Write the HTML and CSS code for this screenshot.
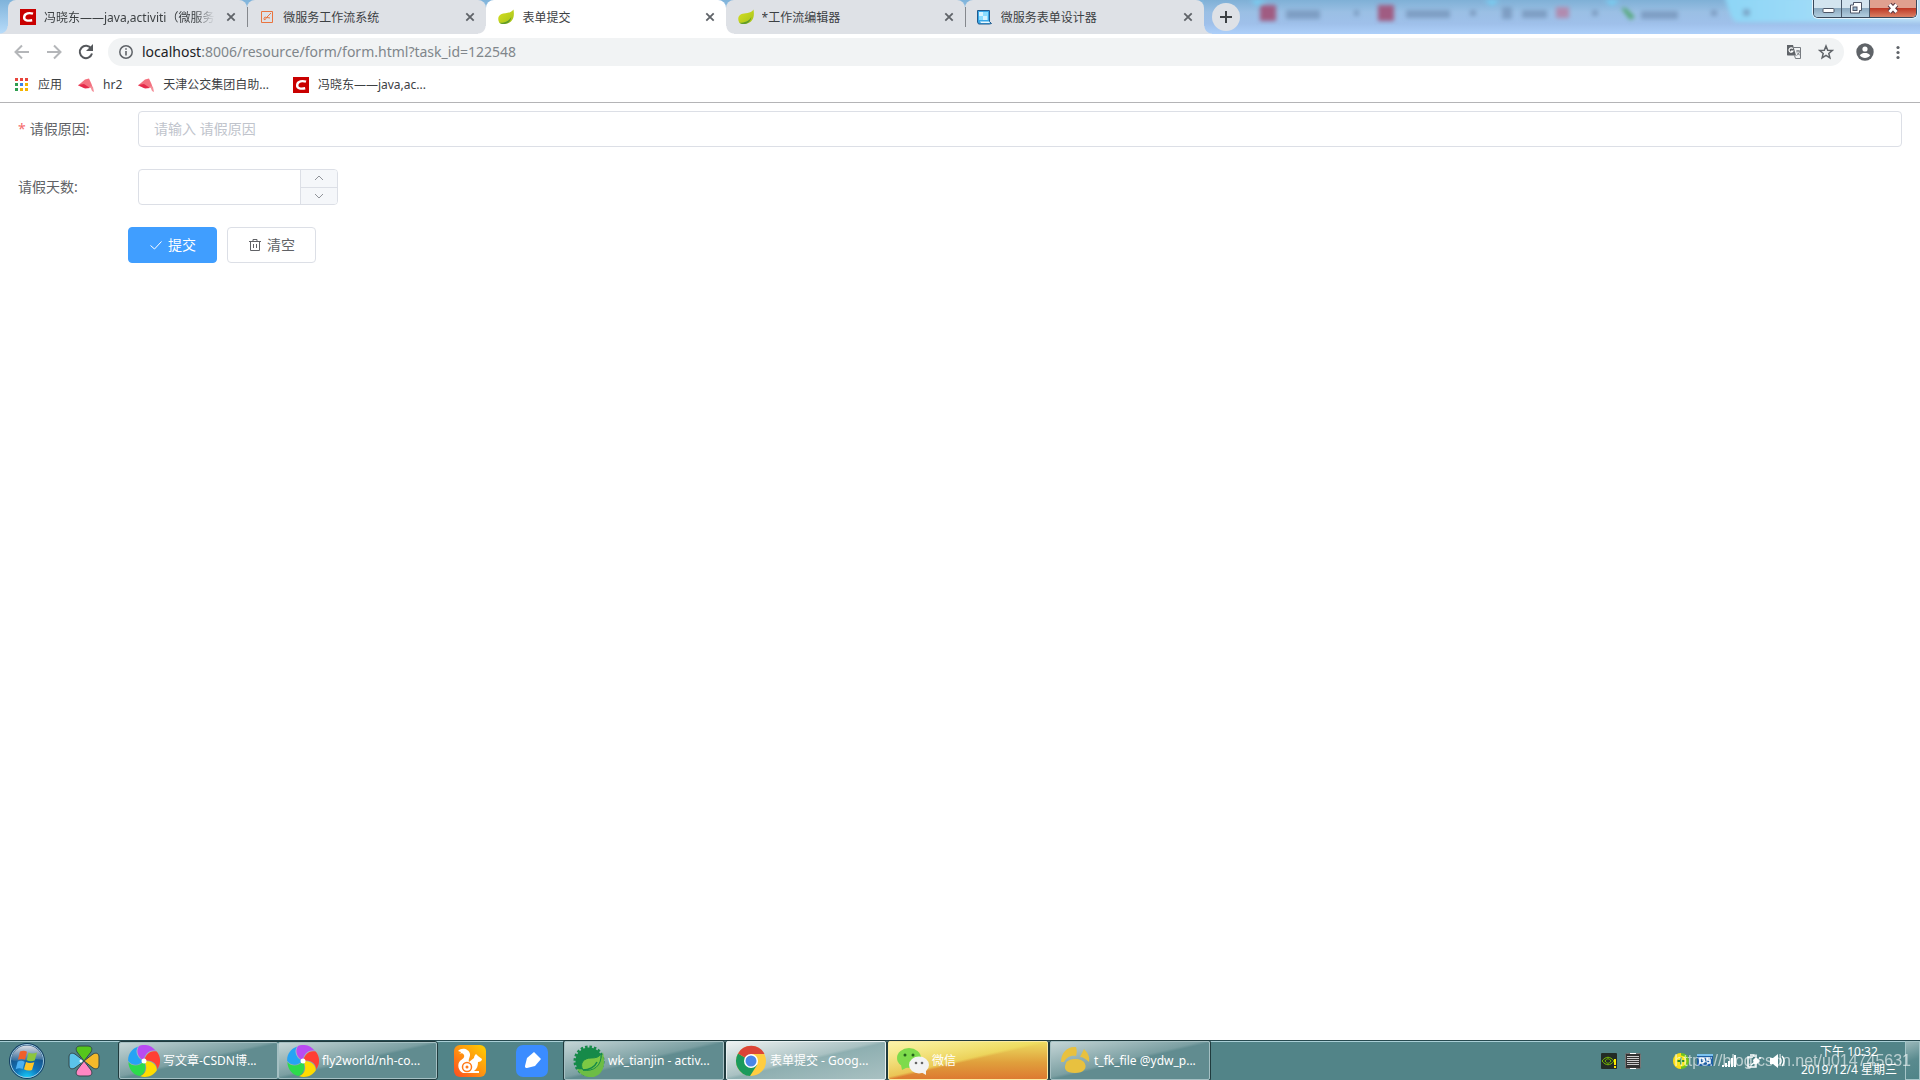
FILE: index.html
```html
<!DOCTYPE html>
<html lang="zh-CN">
<head>
<meta charset="utf-8">
<title>表单提交</title>
<link rel="stylesheet" href="styles.css">
</head>
<body>
<svg class="defs" aria-hidden="true">
  <defs>
    <linearGradient id="leafFill" x1="0" y1="0" x2="1" y2="1"><stop offset="0" stop-color="#d9e021"/><stop offset="1" stop-color="#a3c21a"/></linearGradient>
    <symbol id="close" viewBox="0 0 16 16"><path d="M4.300 4.300l7.400 7.400M11.700 4.300l-7.400 7.400" stroke="#5f6368" stroke-width="1.800" fill="none"/></symbol>
    <symbol id="csdn" viewBox="0 0 16 16"><rect width="16" height="16" fill="#c90000"/><path d="M13 4.700C9.500 3.500 4.700 4 4.200 7.800c-.5 3.900 3.800 4.300 8 3.500" fill="none" stroke="#fff" stroke-width="2.400"/></symbol>
    <symbol id="leaf" viewBox="0 0 16 16"><path d="M15.500.5c.8 5 .5 9-2.500 12C10 15.200 5 15.500 1.500 14-.5 11-.2 7 3 5.300 7 3.500 12.500 5 15.500.5z" fill="url(#leafFill)"/><path d="M1.300 13.800C6 14 11 12.500 13.300 8c-.5 4-3 6.500-6.500 7-2 .3-4 0-5.500-1.200z" fill="#5f9b2c"/></symbol>
    <symbol id="hat" viewBox="0 0 16 16"><path d="M0 8.500L7 2.500l4-1 2.500 5.500 1.500 4.500-3-1-6 .5z" fill="#f4717f"/><path d="M0 8l6-1 6 4-5 .5z" fill="#e52b4b"/><path d="M12 9l3 1 1 5-2-1z" fill="#f4909a"/></symbol>
    <symbol id="pinwheel" viewBox="0 0 32 32">
      <g transform="translate(16 16)">
        <path d="M0 0C-5-3-9-9-5-15 1-17.500 8-15.500 12-10 6-12 0-7 0 0z" fill="#b94bf2"/>
        <path d="M0 0C-5-3-9-9-5-15 1-17.500 8-15.500 12-10 6-12 0-7 0 0z" fill="#ff3f35" transform="rotate(72)"/>
        <path d="M0 0C-5-3-9-9-5-15 1-17.500 8-15.500 12-10 6-12 0-7 0 0z" fill="#ffdc00" transform="rotate(144)"/>
        <path d="M0 0C-5-3-9-9-5-15 1-17.500 8-15.500 12-10 6-12 0-7 0 0z" fill="#2cdb4c" transform="rotate(216)"/>
        <path d="M0 0C-5-3-9-9-5-15 1-17.500 8-15.500 12-10 6-12 0-7 0 0z" fill="#25a3f5" transform="rotate(288)"/>
        <circle r="2.500" fill="#fff"/>
      </g>
    </symbol>
  </defs>
</svg>

<header class="browser">
  <div class="strip">
    <svg class="ghost" viewBox="0 0 716 34" preserveAspectRatio="none" aria-hidden="true">
      <defs>
        <linearGradient id="sky" x1="0" y1="0" x2="0" y2="1"><stop offset="0" stop-color="#7fb0d6"/><stop offset=".35" stop-color="#9abfe4"/><stop offset=".7" stop-color="#9fc0ea"/><stop offset="1" stop-color="#aed0fa"/></linearGradient>
        <linearGradient id="sky2" x1="0" y1="0" x2="1" y2="0"><stop offset="0" stop-color="#8dd6f6"/><stop offset=".35" stop-color="#9bdaf8"/><stop offset="1" stop-color="#bfe0f6"/></linearGradient>
        <filter id="soft"><feGaussianBlur stdDeviation="2"/></filter>
      </defs>
      <rect width="716" height="34" fill="url(#sky)"/>
      <g filter="url(#soft)">
        <path d="M520-4H730V22H532C526 18 524 6 520-4z" fill="url(#sky2)"/>
        <path d="M46 0h16l-8 6zM280 0h16l-8 6zM400 0h16l-8 6z" fill="#78cdf2"/>
        <g fill="#a05c82"><rect x="56" y="5" width="16" height="16"/><rect x="174" y="5" width="16" height="16"/></g>
        <g fill="#7390b5" opacity=".7"><rect x="82" y="10" width="34" height="9"/><rect x="150" y="10" width="5" height="6"/><rect x="202" y="10" width="44" height="8"/><rect x="266" y="10" width="6" height="6"/><rect x="298" y="7" width="10" height="12"/><rect x="318" y="10" width="25" height="8"/><rect x="388" y="10" width="6" height="6"/><rect x="437" y="11" width="37" height="8"/><rect x="507" y="10" width="6" height="6"/><rect x="539" y="9" width="7" height="7"/></g>
        <rect x="352" y="7" width="13" height="11" fill="#b18baf"/><path d="M417 8l5 0 9 9-5 3z" fill="#55a879"/>
      </g>
    </svg>
    <nav class="tabs" aria-label="标签页">
      <div class="tab flare-left"><svg class="fav"><use href="#csdn"/></svg><a class="tab-title faded" href="#">冯晓东——java,activiti（微服务</a><button class="tab-close" aria-label="关闭"><svg><use href="#close"/></svg></button></div>
      <div class="tab divided"><svg class="fav" viewBox="0 0 16 16"><path d="M2.500 2.500h11v11h-11zM5 9c1-1.500 2-1 2 0s-.5 2-2 1.500zM7 9l5-5M8 8.500l3 .5" fill="none" stroke="#e9743f"/></svg><a class="tab-title" href="#">微服务工作流系统</a><button class="tab-close" aria-label="关闭"><svg><use href="#close"/></svg></button></div>
      <div class="tab active flare-left flare-right"><svg class="fav"><use href="#leaf"/></svg><a class="tab-title" href="#" aria-current="page">表单提交</a><button class="tab-close" aria-label="关闭"><svg><use href="#close"/></svg></button></div>
      <div class="tab"><svg class="fav"><use href="#leaf"/></svg><a class="tab-title" href="#">*工作流编辑器</a><button class="tab-close" aria-label="关闭"><svg><use href="#close"/></svg></button></div>
      <div class="tab divided flare-right"><svg class="fav" viewBox="0 0 16 16"><path d="M.5 1.500h12v11l2 2-2 .5h-11l-1-2z" fill="#39a8e8" stroke="#235a8c"/><path d="M2 3h9v8H2z" fill="#8adcff"/><path d="M2 3h4v4H2zM6 7h4v4H6z" fill="#d4f2ff"/><path d="M3 12.500h9l1 1.500H4z" fill="#eaf9ff"/></svg><a class="tab-title" href="#">微服务表单设计器</a><button class="tab-close" aria-label="关闭"><svg><use href="#close"/></svg></button></div>
    </nav>
    <button class="new-tab" aria-label="新标签页"><svg viewBox="0 0 28 28"><path d="M14 8v12M8 14h12" stroke="#3c4043" stroke-width="2"/></svg></button>
    <div class="window-buttons">
      <button class="win" aria-label="最小化"><svg viewBox="0 0 28 17"><rect x="9" y="8.500" width="11" height="4" rx="1" fill="#fff" stroke="#4d5566"/></svg></button>
      <button class="win" aria-label="还原"><svg viewBox="0 0 28 17"><path d="M11.500 2.500h8v8h-2v2.500h-9V5h3z" fill="#fff" stroke="#4d5566"/><rect x="11" y="7" width="4" height="3.500" fill="#9dbbd2" stroke="#4d5566"/></svg></button>
      <button class="win win-close" aria-label="关闭窗口"><svg viewBox="0 0 28 17"><path d="M10.500 4.500l7 7.500M17.500 4.500l-7 7.500" stroke="#5b3a44" stroke-width="5"/><path d="M10.500 4.500l7 7.500M17.500 4.500l-7 7.500" stroke="#fff" stroke-width="3"/></svg></button>
    </div>
  </div>

  <div class="toolbar">
    <button class="tool" aria-label="后退"><svg viewBox="0 0 16 16"><path d="M15 8H2M8 1.500L1.500 8 8 14.500" fill="none" stroke="#b4b6b9" stroke-width="2"/></svg></button>
    <button class="tool" aria-label="前进"><svg viewBox="0 0 16 16"><path d="M1 8h13M8 1.500L14.500 8 8 14.500" fill="none" stroke="#b4b6b9" stroke-width="2"/></svg></button>
    <button class="tool" aria-label="刷新"><svg viewBox="0 0 16 16"><path d="M13.200 4.500A6.200 6.200 0 1 0 14 9.600" fill="none" stroke="#55585c" stroke-width="2"/><path d="M15 0v7H8z" fill="#55585c"/></svg></button>
    <div class="omnibox">
      <svg class="glyph" viewBox="0 0 16 16"><circle cx="8" cy="8" r="6.200" fill="none" stroke="#5f6368" stroke-width="1.500"/><path d="M8 7v4.500M8 4.200v1.600" stroke="#5f6368" stroke-width="1.600"/></svg>
      <a class="url" href="#"><span class="host">localhost</span>:8006/resource/form/form.html?task_id=122548</a>
      <button class="tool" aria-label="翻译此页"><svg viewBox="0 0 16 16"><path d="M1 1h6l3 10.500H1.500L1 11z" fill="#5f6368"/><path d="M7.500 3.500h7v11h-5l-1-3M10 7h4M12 6v1.500M13.500 7.500c-.5 2-1.500 3-3 4M11 8.500l3 3" fill="none" stroke="#777b80"/><path d="M6.800 4.700A2.100 2.100 0 1 0 7 7H5" fill="none" stroke="#fff" stroke-width="1.200"/></svg></button>
      <button class="tool" aria-label="添加书签"><svg viewBox="0 0 16 16"><path d="M8 2l1.700 4.200 4.500.3-3.400 2.900 1.100 4.400L8 11.400l-3.900 2.400 1.100-4.400L1.800 6.500l4.500-.3z" fill="none" stroke="#5f6368" stroke-width="1.500"/></svg></button>
    </div>
    <button class="tool profile" aria-label="用户"><svg viewBox="0 0 18 18"><circle cx="9" cy="9" r="8.700" fill="#5f6368"/><circle cx="9" cy="6" r="2.600" fill="#fff"/><path d="M3.800 12.300C5 10.400 7 9.900 9 9.900s4 .5 5.200 2.400C13 14.200 11 15 9 15s-4-.8-5.200-2.700z" fill="#fff"/></svg></button>
    <button class="tool" aria-label="菜单"><svg viewBox="0 0 16 16" fill="#5f6368"><circle cx="8" cy="3.500" r="1.600"/><circle cx="8" cy="8.500" r="1.600"/><circle cx="8" cy="13.500" r="1.600"/></svg></button>
  </div>

  <nav class="bookmarks" aria-label="书签">
    <a href="#"><svg class="fav" viewBox="0 0 16 16"><path d="M2 1h3v3H2zM7 1h3v3H7zM12 1h3v3h-3z" fill="#e8453c"/><path d="M2 6h3v3H2zM2 11h3v3H2z" fill="#2f9e50"/><path d="M7 6h3v3H7z" fill="#3b82e8"/><path d="M12 6h3v3h-3zM7 11h3v3H7zM12 11h3v3h-3z" fill="#f5b400"/></svg>应用</a>
    <a href="#"><svg class="fav"><use href="#hat"/></svg>hr2</a>
    <a href="#"><svg class="fav"><use href="#hat"/></svg>天津公交集团自助...</a>
    <a class="spaced" href="#"><svg class="fav"><use href="#csdn"/></svg>冯晓东——java,ac...</a>
  </nav>
</header>

<main class="page">
  <form class="form">
    <div class="field">
      <label class="required" for="reason">请假原因:</label>
      <input class="text" id="reason" type="text" placeholder="请输入 请假原因">
    </div>
    <div class="field">
      <label for="days">请假天数:</label>
      <div class="stepper">
        <input id="days" type="text" inputmode="numeric">
        <div class="steps">
          <button type="button" aria-label="增加"><svg viewBox="0 0 10 6"><path d="M1 5l4-4 4 4"/></svg></button>
          <button type="button" aria-label="减少"><svg viewBox="0 0 10 6"><path d="M1 1l4 4 4-4"/></svg></button>
        </div>
      </div>
    </div>
    <div class="actions">
      <button class="btn primary" type="submit"><svg viewBox="0 0 14 14"><path d="M1.500 7.500l4 3.500 7-7.500"/></svg>提交</button>
      <button class="btn" type="reset"><svg viewBox="0 0 14 14"><path d="M1 3.500h12M2.500 3.500v9h9v-9M5 3.500v-2h4v2M5.500 6v4M8.500 6v4"/></svg>清空</button>
    </div>
  </form>
</main>

<footer class="taskbar">
  <button class="orb" aria-label="开始"><svg viewBox="0 0 38 38"><defs><radialGradient id="orbFill" cx=".5" cy="1" r=".9"><stop offset="0" stop-color="#16d4ff"/><stop offset=".4" stop-color="#1173b8"/><stop offset="1" stop-color="#1a4270"/></radialGradient><linearGradient id="gloss" x1="0" y1="0" x2="0" y2="1"><stop offset="0" stop-color="#fff" stop-opacity=".85"/><stop offset="1" stop-color="#fff" stop-opacity=".1"/></linearGradient></defs><circle cx="19" cy="19" r="17.500" fill="url(#orbFill)" stroke="#143f63"/><circle cx="19" cy="19" r="16.500" fill="none" stroke="#9cc9df"/><path d="M3 18C4 9 11 3.500 19 3.500S34 9 35 18c-9-3-23 3-32 0z" fill="url(#gloss)"/><path d="M12 9.500c3-1.200 5-1 7 .2l-2 8c-2.500-1-4.500-1-7 0z" fill="#f0602a"/><path d="M20.500 10.500c2.500 1.300 5 1.300 8.500 0l-2.300 8c-3 1.200-5.500 1-8-.3z" fill="#8cc63f"/><path d="M9.700 19.500c2.500-1 4.500-1 7 .2l-2 7.300c-2.500-1-4.500-1-7 .2z" fill="#4bb0f2"/><path d="M18 20c2.500 1.200 5 1.300 8.300.2L24 28c-3 1-5.500.6-8-.8z" fill="#ffc526"/></svg></button>
  <button class="quick" aria-label="四叶草"><svg viewBox="0 0 32 32"><g stroke="#33474a"><path d="M16 16L9 7C7 3 9 1 12 1h8c3 0 5 2 3 6z" fill="#55c61c"/><path d="M16 16l9-7c4-2 6 0 6 3v8c0 3-2 5-6 3z" fill="#f4b92a"/><path d="M16 16l7 9c2 4 0 6-3 6h-8c-3 0-5-2-3-6z" fill="#ff87c3"/><path d="M16 16l-9-7c-4-2-6 0-6 3v8c0 3 2 5 6 3z" fill="#5bc3ea"/></g><circle cx="13" cy="16" r="1.500" fill="#fff"/></svg></button>
  <div class="group">
    <button class="task"><svg><use href="#pinwheel"/></svg><span>写文章-CSDN博...</span></button>
    <button class="task"><svg><use href="#pinwheel"/></svg><span>fly2world/nh-co...</span></button>
  </div>
  <div class="pins">
    <button class="quick" aria-label="UC浏览器"><svg viewBox="0 0 32 32"><defs><linearGradient id="ucFill" x1="1" y1="0" x2="0" y2="1"><stop offset="0" stop-color="#ffd000"/><stop offset=".5" stop-color="#ff9410"/><stop offset="1" stop-color="#ff4b1f"/></linearGradient></defs><rect width="32" height="32" rx="6" fill="url(#ucFill)"/><path d="M4 6c4-4 11-2 12 3 .5 3-2 5-1 8l5-4c0-2 1-3 2-4l2 2 4 3c0 2-2 3-4 3 0 4-1 7-4 9h5v2H9c-5-2-6-9-3-12 2-2 5-3 4-6-1-2-3-2-5-1 1-1 2-1 2-2z" fill="#fff"/><circle cx="13" cy="22" r="4.500" fill="none" stroke="#ff7a18" stroke-width="1.500"/><circle cx="13" cy="22" r="1.500" fill="#ff7a18"/></svg></button>
    <button class="quick" aria-label="笔记"><svg viewBox="0 0 32 32"><rect width="32" height="32" rx="7" fill="#3b8cff"/><path d="M9 21l2-8 7-6 7 7-6 7-8 2c-2 .3-2-1-2-2z" fill="#fff"/></svg></button>
  </div>
  <div class="windows">
    <button class="task framed"><svg viewBox="0 0 32 32"><circle cx="16" cy="16" r="13.500" fill="#168a49"/><circle cx="16" cy="16" r="14" fill="none" stroke="#168a49" stroke-width="3" stroke-dasharray="2.500 1.900"/><path d="M30 7c2 11 2 21-9 25-7 1-14-2-17-8 7 1 23 0 26-17z" fill="#6dbd45"/><path d="M28 9c1 12-8 18-18 16-4-7 1-12 8-12 5 0 8-1 10-4z" fill="#7cc844" stroke="#168a49"/><path d="M10 25c6 0 12-3 14-8" fill="none" stroke="#168a49" stroke-width="1.500"/></svg><span>wk_tianjin - activ...</span></button>
    <button class="task framed current"><svg viewBox="0 0 32 32"><circle cx="16" cy="16" r="15" fill="#ffcd40"/><path d="M16 16L3 8.500A15 15 0 0 0 15 31l7-11z" fill="#1a9a5b"/><path d="M16 16L3 8.500A15 15 0 0 1 29.500 9H16z" fill="#db4437"/><circle cx="16" cy="16" r="7" fill="#fff"/><circle cx="16" cy="16" r="5.500" fill="#4a86e8"/></svg><span>表单提交 - Goog...</span></button>
    <button class="task framed alert"><svg viewBox="0 0 32 32"><ellipse cx="12" cy="13" rx="12" ry="10" fill="#7edb4c"/><path d="M4 20l1 5 6-3z" fill="#7edb4c"/><circle cx="8" cy="10" r="1.500" fill="#26631c"/><circle cx="16" cy="10" r="1.500" fill="#26631c"/><ellipse cx="22" cy="20" rx="10" ry="8.500" fill="#f2f3f3"/><path d="M24 27l5 3v-5z" fill="#f2f3f3"/><circle cx="19" cy="18" r="1.300" fill="#666"/><circle cx="25" cy="18" r="1.300" fill="#666"/></svg><span>微信</span></button>
    <button class="task framed"><svg viewBox="0 0 32 32" fill="#e8c13f"><path d="M2 17C2 8 8 1 17 2c1 3 1 6 0 9-6-1-10 2-12 6z"/><path d="M25 4c4 4 6 8 5 13-3-3-6-5-9-5z"/><path d="M7 18c2-5 17-6 19 1 2 4-1 9-10 9S4 24 7 18z"/></svg><span>t_fk_file @ydw_p...</span></button>
  </div>
  <div class="tray">
    <div class="tray-icons">
      <svg viewBox="0 0 16 16"><rect width="16" height="16" rx="1" fill="#232b25"/><path d="M1 8c4-5 8-5 12 0-4 5-8 5-12 0zM4 8c2-3 4-3 6 0-2 3-4 3-6 0z" fill="none" stroke="#76b900"/><path d="M14 6v6M14 13v2" stroke="#ffe600" stroke-width="2"/></svg>
      <svg viewBox="0 0 16 16"><rect x=".5" y=".5" width="15" height="15" rx="1" fill="#333" stroke="#777"/><path d="M2 3.500h12M2 5.500h12M2 7.500h12M2 9.500h12M2 11.500h12" stroke="#ccc"/><path d="M5 .5h6M5 15.500h6" stroke="#fff"/></svg>
    </div>
    <div class="tray-icons">
      <svg viewBox="0 0 16 16"><circle cx="8" cy="8" r="8" fill="#6fc321"/><path d="M8 0a8 8 0 0 0 0 16z" fill="#ffd91a"/><circle cx="8" cy="8" r="5.500" fill="#f7e61a"/><path d="M8 4.500v7M4.500 8h7" stroke="#2b8c22" stroke-width="2"/></svg>
      <svg viewBox="0 0 16 16"><path d="M0 2h16v11H0z" fill="#1d5fa5"/><path d="M0 1h16v2H0z" fill="#7cc2ef"/><path d="M3 5h2c3 0 3 5 0 5H3zM13 5h-3v2h3v3h-3" fill="none" stroke="#fff" stroke-width="1.500"/></svg>
      <svg viewBox="0 0 16 16"><path d="M1 12h2v2H1zM4 10h2v4H4zM7 8h2v6H7zM10 5h2v9h-2zM13 2h2v12h-2z" fill="#fff"/></svg>
      <svg viewBox="0 0 16 16"><path d="M8 4H3v10h8v-3M5 2h4v2" fill="none" stroke="#fff" stroke-width="1.500"/><path d="M8 7l3-3 4 4-3 3H9z" fill="#fff"/><path d="M6 12l4-3M11 1.500v3M14 5h2" stroke="#fff" stroke-width="1.500"/></svg>
      <svg viewBox="0 0 16 16"><path d="M1 5h3l5-4v14l-5-4H1z" fill="#fff"/><path d="M11 5c1.500 2 1.500 4 0 6M13 3c2.500 3 2.500 7 0 10" fill="none" stroke="#fff" stroke-width="1.300"/></svg>
    </div>
    <time class="clock" datetime="2019-12-04T22:32"><span>下午 10:32</span><span>2019/12/4 星期三</span></time>
    <button class="peek" aria-label="显示桌面"></button>
  </div>
  <div class="watermark">https://blog.csdn.net/u014745631</div>
</footer>
</body>
</html>
```
FILE: styles.css
```css
* { box-sizing: border-box; }

body {
  margin: 0;
  min-height: 100vh;
  display: flex;
  flex-direction: column;
  background: #fff;
  color: #3c4043;
  font: 12px/16px "Noto Sans", "Noto Sans CJK SC", sans-serif;
}

button {
  margin: 0;
  padding: 0;
  border: 0;
  background: none;
  font: inherit;
  color: inherit;
  display: flex;
  align-items: center;
  justify-content: center;
}

a { color: inherit; text-decoration: none; }
svg { display: block; flex: none; }

.defs { position: absolute; width: 0; height: 0; }
.fav { width: 16px; height: 16px; }

/* Tab strip */
.strip {
  position: relative;
  display: flex;
  height: 34px;
  padding-left: 8px;
  background: linear-gradient(#7fb3da, #b8dcfa);
}

.ghost {
  position: absolute;
  inset: 0 0 0 auto;
  width: calc(100% - 1204px);
  height: 34px;
}

.tabs { display: flex; flex: 0 1 1196px; min-width: 0; }

.tab {
  position: relative;
  flex: 1 1 0;
  min-width: 0;
  display: flex;
  align-items: center;
  gap: 8px;
  padding: 0 8px 0 12px;
  background: #dee1e6;
  border-radius: 8px 8px 0 0;
}

.tab-title { flex: 1; overflow: hidden; white-space: nowrap; line-height: 18px; padding-top: 2px; }
.faded { mask-image: linear-gradient(to right, #000 88%, transparent); }
.tab-close svg { width: 16px; height: 16px; }
.active { background: #fff; z-index: 1; }

.divided::before {
  content: "";
  position: absolute;
  left: 0;
  top: 7px;
  width: 1px;
  height: 20px;
  background: #85888d;
}

.flare-left::before,
.flare-right::after {
  content: "";
  position: absolute;
  bottom: 0;
  width: 8px;
  height: 8px;
}

.flare-left::before {
  right: 100%;
  background: radial-gradient(circle at 0 0, transparent 7px, #dee1e6 8px);
}

.flare-right::after {
  left: 100%;
  background: radial-gradient(circle at 100% 0, transparent 7px, #dee1e6 8px);
}

.active::before { background: radial-gradient(circle at 0 0, transparent 7px, #fff 8px); }
.active::after { background: radial-gradient(circle at 100% 0, transparent 7px, #fff 8px); }

.new-tab {
  position: relative;
  width: 28px;
  height: 28px;
  margin: 3px 8px;
  border-radius: 50%;
  background: #dee1e6;
}

.new-tab svg { width: 28px; height: 28px; }

.window-buttons {
  position: relative;
  display: flex;
  height: 18px;
  margin: 0 3px 0 auto;
  border: 1px solid #39485a;
  border-top: 0;
  border-radius: 0 0 5px 5px;
  overflow: hidden;
  box-shadow: 0 0 0 1px #e4f3fc;
}

.win {
  width: 28px;
  background: linear-gradient(#d3e4ef 45%, #8ba9bf 50%, #b3cfe0);
  border-right: 1px solid #47586a;
}

.win svg { width: 28px; height: 17px; }

.win-close {
  width: 46px;
  border: 0;
  background: linear-gradient(#e0a08f 45%, #bf3a26 50%, #da8064);
}

/* Address row */
.toolbar {
  display: flex;
  align-items: center;
  gap: 16px;
  height: 36px;
  padding: 0 14px;
}

.tool svg { width: 16px; height: 16px; }
.profile svg { width: 18px; height: 18px; }

.omnibox {
  flex: 1;
  min-width: 0;
  display: flex;
  align-items: center;
  gap: 16px;
  height: 28px;
  margin: 0 -4px 0 -2px;
  padding: 0 10px;
  border-radius: 14px;
  background: #f1f3f4;
}

.glyph { width: 16px; height: 16px; }

.url {
  flex: 1;
  margin-left: -8px;
  overflow: hidden;
  white-space: nowrap;
  font-size: 14px;
  line-height: 20px;
  color: #80868b;
}

.host { color: #202124; }

.bookmarks {
  display: flex;
  gap: 16px;
  height: 33px;
  padding: 6px 13px 9px;
  border-bottom: 1px solid #b4b4b6;
}

.bookmarks a { display: flex; align-items: center; gap: 9px; white-space: nowrap; }
.bookmarks .spaced { margin-left: 8px; }

/* Form */
.page { flex: 1; padding: 8px 18px; }

.form {
  display: flex;
  flex-direction: column;
  gap: 22px;
  color: #606266;
  font-size: 14px;
  line-height: 36px;
}

.field { display: flex; }
.field label { width: 120px; flex: none; }

.required::before {
  content: "*";
  margin-right: 4px;
  color: #f56c6c;
}

.text,
.stepper {
  height: 36px;
  border: 1px solid #dcdfe6;
  border-radius: 4px;
  background: #fff;
}

.text {
  flex: 1;
  min-width: 0;
  padding: 0 15px;
  font: inherit;
  color: inherit;
}

.text::placeholder { color: #c0c4cc; opacity: 1; }
.stepper { display: flex; width: 200px; overflow: hidden; }

.stepper input {
  flex: 1;
  min-width: 0;
  padding: 0 15px;
  border: 0;
  background: none;
  font: inherit;
  color: inherit;
  text-align: center;
}

.steps {
  display: flex;
  flex-direction: column;
  width: 37px;
  border-left: 1px solid #dcdfe6;
  background: #f5f7fa;
}

.steps button { flex: 1; }
.steps button + button { border-top: 1px solid #dcdfe6; }
.steps svg { width: 10px; height: 6px; fill: none; stroke: #909399; }

.actions { display: flex; gap: 10px; padding-left: 110px; }

.btn {
  gap: 5px;
  height: 36px;
  padding: 0 20px;
  border: 1px solid #dcdfe6;
  border-radius: 4px;
  background: #fff;
  line-height: 16px;
}

.btn svg { width: 14px; height: 14px; fill: none; stroke: currentColor; }
.primary { background: #409eff; border-color: #409eff; color: #fff; }

/* Taskbar */
.taskbar {
  position: relative;
  display: flex;
  height: 40px;
  border-top: 1px solid #274a50;
  box-shadow: inset 0 1px #a9cfd6;
  background: #528488;
  color: #fff;
}

.orb { width: 54px; }
.orb svg { width: 38px; height: 38px; }
.quick svg { width: 32px; height: 32px; }
.taskbar > .quick { width: 60px; margin-right: 4px; }

.group {
  display: flex;
  width: 320px;
  border: 1px solid #203b3e;
  border-radius: 3px;
}

.task {
  flex: 1;
  min-width: 0;
  justify-content: flex-start;
  gap: 3px;
  padding: 0 8px;
  border: 1px solid #a5c0c3;
  border-radius: 2px;
  background: linear-gradient(to bottom right, #c4d5d6, #7b9fa2 47%, #618c90 51%, #618c90);
  white-space: nowrap;
}

.task svg { width: 32px; height: 32px; }
.pins { display: flex; gap: 30px; padding: 0 16px; }
.windows { display: flex; gap: 2px; }
.framed { flex: none; width: 160px; box-shadow: 0 0 0 1px #203b3e; }

.current {
  border-color: #e8f0f1;
  background: linear-gradient(to bottom right, #edf1f1, #a9c1c2 47%, #8eafb1 51%, #a9c1c2);
}

.alert {
  border-color: #fbeaa0;
  background: linear-gradient(to bottom right, #fbf3a8, rgba(240, 225, 100, .7) 47%, transparent 51%), linear-gradient(#ecdc60, #e0a03c 55%, #dd7a31);
}

.tray { display: flex; align-items: center; margin-left: auto; gap: 16px; }
.tray-icons { display: flex; gap: 8px; }
.tray-icons + .tray-icons { margin-left: 16px; }
.tray-icons svg { width: 16px; height: 16px; }

.clock {
  display: flex;
  flex-direction: column;
  align-items: center;
  line-height: 18px;
  white-space: nowrap;
}

.peek {
  align-self: stretch;
  width: 15px;
  margin-left: -8px;
  border: 1px solid #a5c5c8;
  background: linear-gradient(160deg, #9ab8ba, #598a8e 50%, #4f8488);
}

.watermark {
  position: absolute;
  right: 9px;
  top: 10px;
  font: 16px/20px "Liberation Sans", sans-serif;
  color: #fff;
  opacity: .6;
  pointer-events: none;
}
```
